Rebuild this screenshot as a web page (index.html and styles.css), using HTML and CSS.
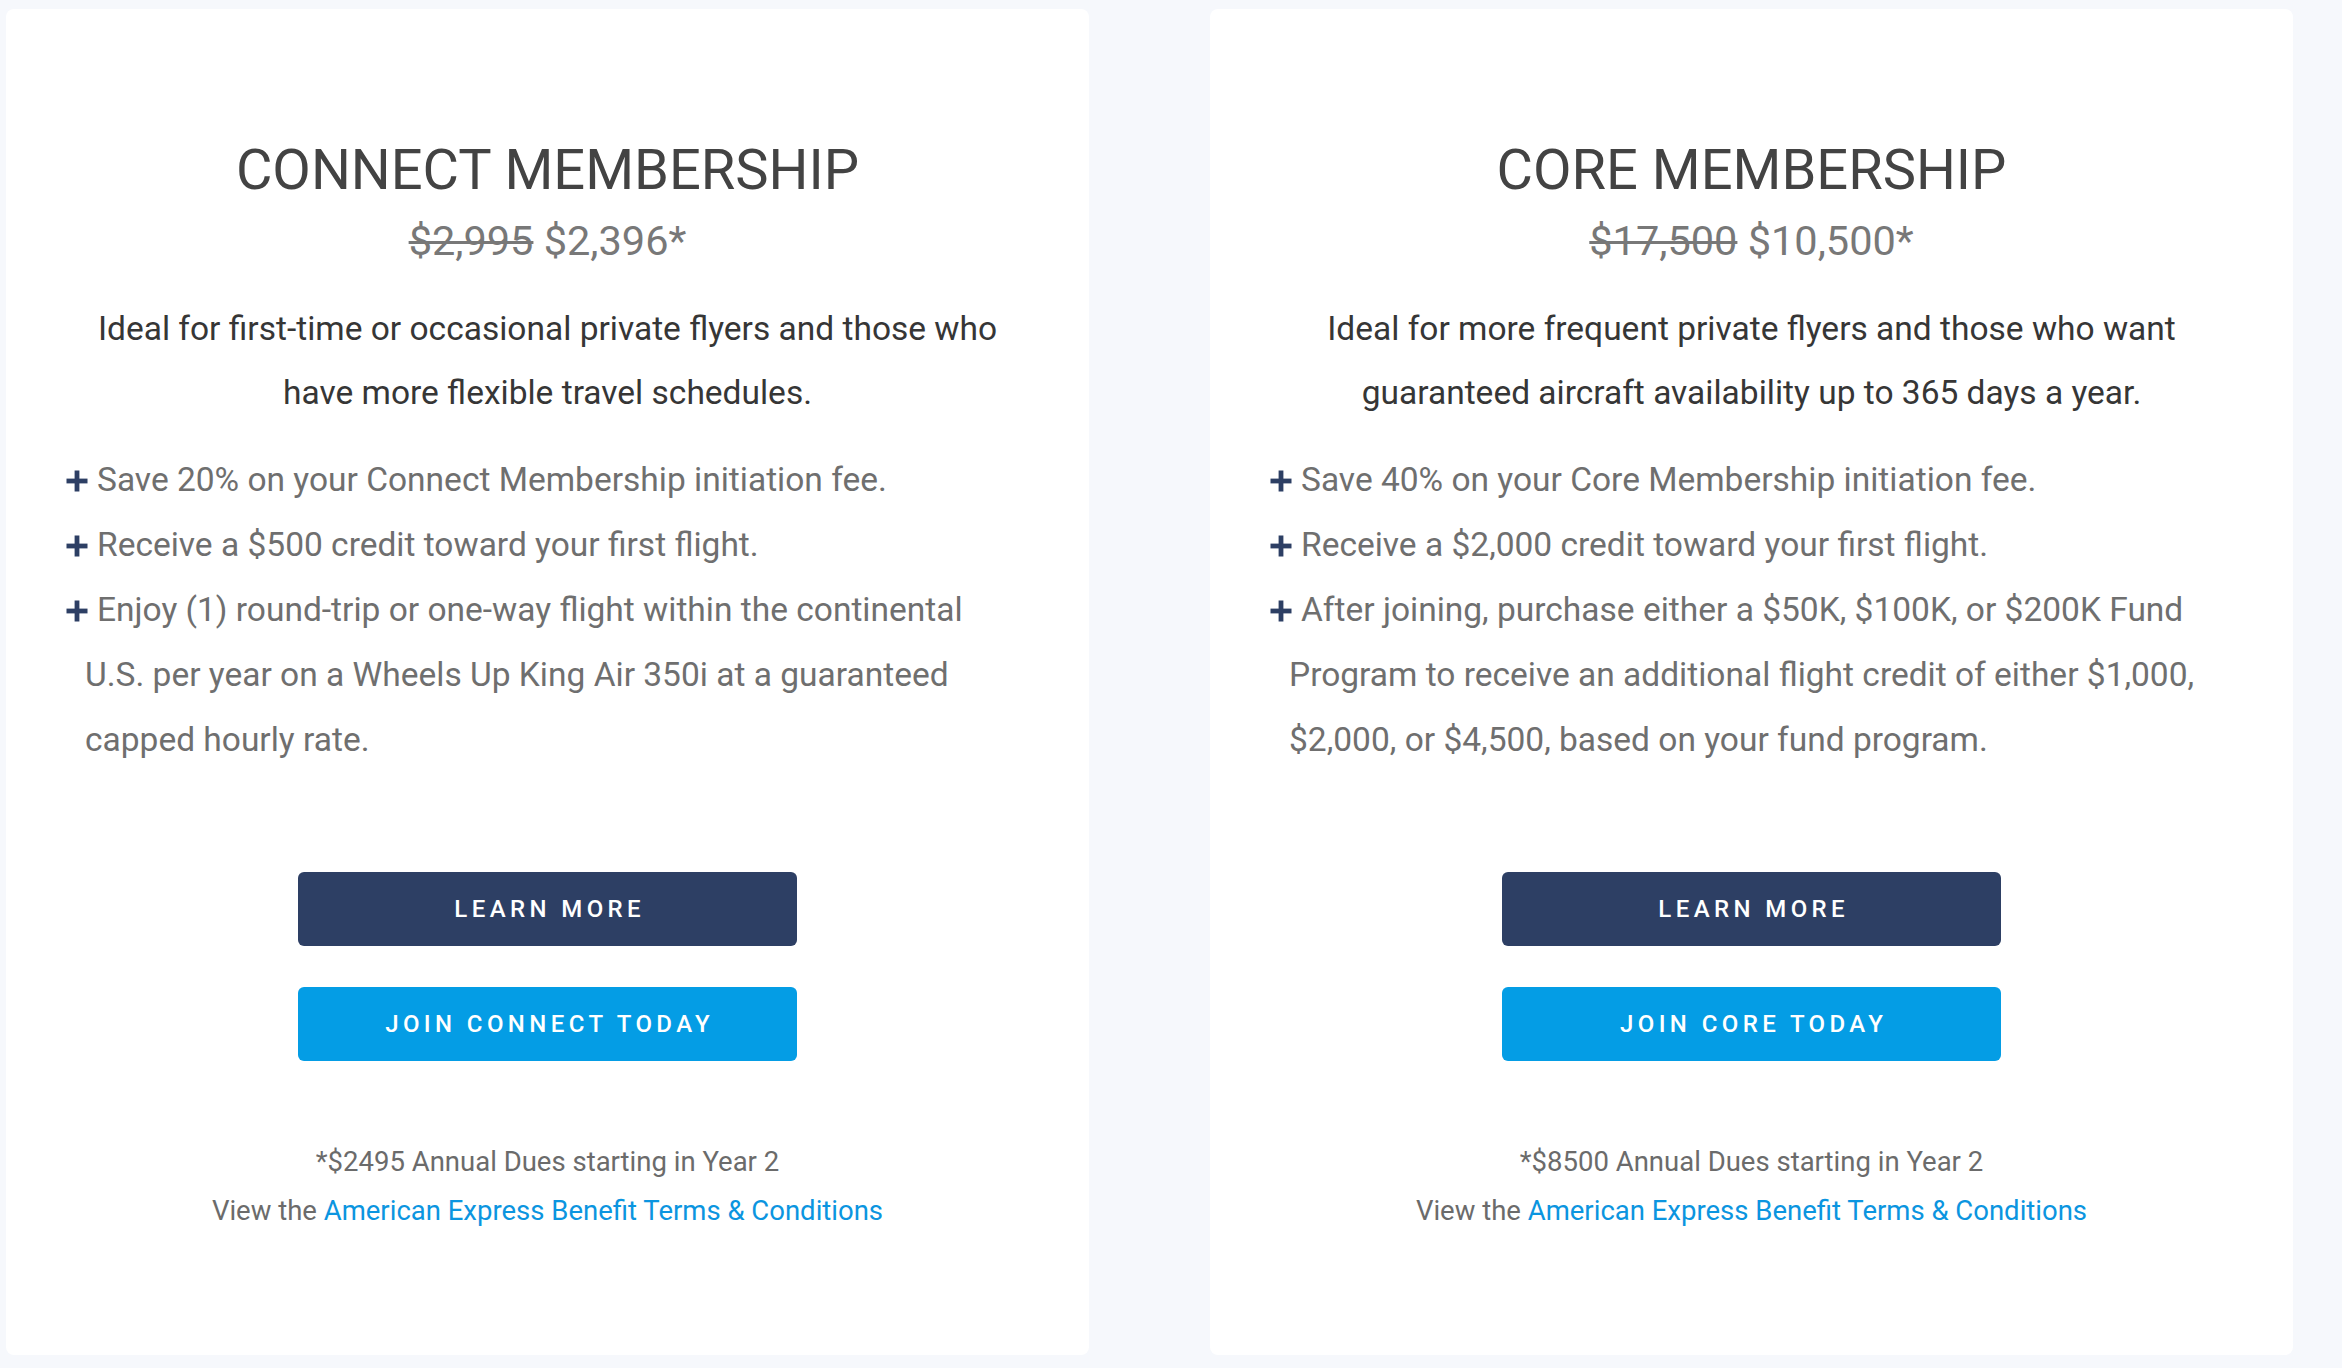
FILE: index.html
```html
<!DOCTYPE html>
<html lang="en">
<head>
<meta charset="utf-8">
<title>Memberships</title>
<link rel="stylesheet" href="styles.css">
</head>
<body>
<div class="page">
  <section class="card">
    <h2 class="title">CONNECT MEMBERSHIP</h2>
    <p class="price"><s class="old">$2,995</s> $2,396*</p>
    <p class="desc">Ideal for first-time or occasional private flyers and those who have more flexible travel schedules.</p>
    <ul class="perks">
      <li><span class="plus"><svg viewBox="0 0 22 22" width="22" height="22"><rect x="8.6" y="0.5" width="4.8" height="21" fill="#2d3f64"/><rect x="0.5" y="8.6" width="21" height="4.8" fill="#2d3f64"/></svg></span>Save 20% on your Connect Membership initiation fee.</li>
      <li><span class="plus"><svg viewBox="0 0 22 22" width="22" height="22"><rect x="8.6" y="0.5" width="4.8" height="21" fill="#2d3f64"/><rect x="0.5" y="8.6" width="21" height="4.8" fill="#2d3f64"/></svg></span>Receive a $500 credit toward your first flight.</li>
      <li><span class="plus"><svg viewBox="0 0 22 22" width="22" height="22"><rect x="8.6" y="0.5" width="4.8" height="21" fill="#2d3f64"/><rect x="0.5" y="8.6" width="21" height="4.8" fill="#2d3f64"/></svg></span>Enjoy (1) round-trip or one-way flight within the continental U.S. per year on a Wheels Up King Air 350i at a guaranteed capped hourly rate.</li>
    </ul>
    <div class="actions">
      <a class="btn btn-dark" href="#">LEARN MORE</a>
      <a class="btn btn-blue" href="#">JOIN CONNECT TODAY</a>
    </div>
    <div class="notes">
      <p>*$2495 Annual Dues starting in Year 2</p>
      <p>View the <a class="link" href="#">American Express Benefit Terms &amp; Conditions</a></p>
    </div>
  </section>
  <section class="card">
    <h2 class="title">CORE MEMBERSHIP</h2>
    <p class="price"><s class="old">$17,500</s> $10,500*</p>
    <p class="desc">Ideal for more frequent private flyers and those who want guaranteed aircraft availability up to 365 days a year.</p>
    <ul class="perks">
      <li><span class="plus"><svg viewBox="0 0 22 22" width="22" height="22"><rect x="8.6" y="0.5" width="4.8" height="21" fill="#2d3f64"/><rect x="0.5" y="8.6" width="21" height="4.8" fill="#2d3f64"/></svg></span>Save 40% on your Core Membership initiation fee.</li>
      <li><span class="plus"><svg viewBox="0 0 22 22" width="22" height="22"><rect x="8.6" y="0.5" width="4.8" height="21" fill="#2d3f64"/><rect x="0.5" y="8.6" width="21" height="4.8" fill="#2d3f64"/></svg></span>Receive a $2,000 credit toward your first flight.</li>
      <li><span class="plus"><svg viewBox="0 0 22 22" width="22" height="22"><rect x="8.6" y="0.5" width="4.8" height="21" fill="#2d3f64"/><rect x="0.5" y="8.6" width="21" height="4.8" fill="#2d3f64"/></svg></span>After joining, purchase either a $50K, $100K, or $200K Fund Program to receive an additional flight credit of either $1,000, $2,000, or $4,500, based on your fund program.</li>
    </ul>
    <div class="actions">
      <a class="btn btn-dark" href="#">LEARN MORE</a>
      <a class="btn btn-blue" href="#">JOIN CORE TODAY</a>
    </div>
    <div class="notes">
      <p>*$8500 Annual Dues starting in Year 2</p>
      <p>View the <a class="link" href="#">American Express Benefit Terms &amp; Conditions</a></p>
    </div>
  </section>
</div>
</body>
</html>
```
FILE: styles.css
```css
* { box-sizing: border-box; }
html, body { margin: 0; padding: 0; }
body {
  background: #f6f8fc;
  font-family: Roboto, "Liberation Sans", Arial, sans-serif;
  width: 2342px;
  height: 1368px;
  overflow: hidden;
}
.page {
  display: grid;
  grid-template-columns: 1083px 1083px;
  column-gap: 121px;
  padding: 9px 0 0 6px;
}
.card {
  background: #ffffff;
  border-radius: 8px;
  height: 1346px;
  padding: 128px 60px 0 60px;
  text-align: center;
}
.title {
  margin: 0;
  font-size: 56px;
  line-height: 66px;
  font-weight: 400;
  color: #434343;
}
.price {
  margin: 13px 0 0;
  font-size: 41.5px;
  line-height: 50px;
  color: #787878;
}
.old {
  text-decoration: line-through;
  text-decoration-thickness: 3px;
}
.desc {
  margin: 31px 0 0;
  font-size: 33.5px;
  line-height: 64px;
  color: #363636;
}
.perks {
  list-style: none;
  margin: 22px 0 0;
  padding: 0 0 0 19px;
  text-align: left;
  font-size: 33.5px;
  line-height: 65px;
  color: #6f6f6f;
}
.perks li {
  text-indent: -19px;
}
.plus {
  display: inline-block;
  width: 31px;
  text-indent: 0;
  vertical-align: baseline;
}
.plus svg {
  display: inline-block;
  vertical-align: -1px;
}
.actions {
  margin-top: 100px;
  display: flex;
  flex-direction: column;
  align-items: center;
  gap: 41px;
}
.btn {
  display: flex;
  align-items: center;
  justify-content: center;
  width: 499px;
  height: 74px;
  border-radius: 6px;
  color: #ffffff;
  text-decoration: none;
  font-size: 24px;
  font-weight: 500;
  letter-spacing: 4.4px;
  padding-left: 4.4px;
}
.btn-dark { background: #2d3f64; }
.btn-blue { background: #049de5; }
.notes {
  margin-top: 76px;
  font-size: 27.5px;
  line-height: 49px;
  color: #6b6b6b;
}
.notes p { margin: 0; }
.link {
  color: #0b95e0;
  text-decoration: none;
}
```
